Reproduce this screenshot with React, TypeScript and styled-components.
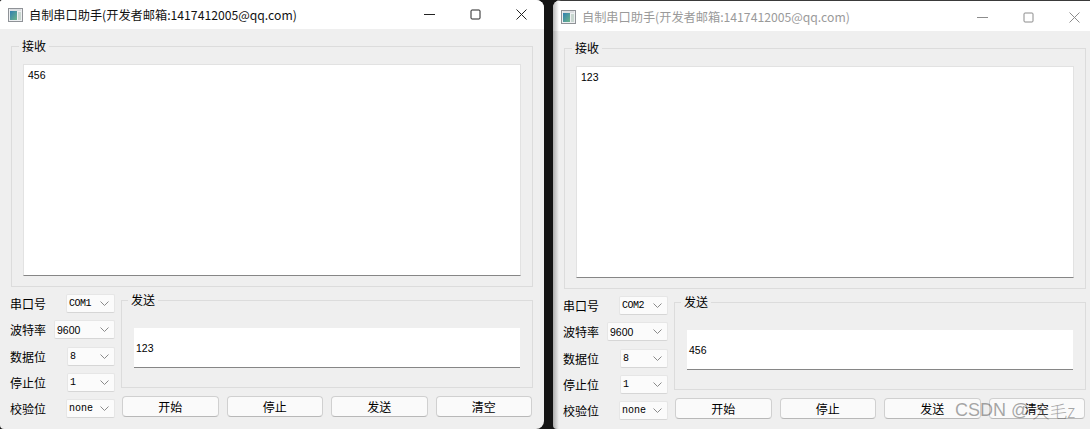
import React from "react";
import styled, { createGlobalStyle } from "styled-components";

const Global = createGlobalStyle`
  html, body { margin: 0; padding: 0; width: 1090px; height: 429px; overflow: hidden; background: #111; }
  * { box-sizing: border-box; }
`;

const Desktop = styled.div`
  position: relative;
  display: flex;
  gap: 9px;
  width: 1090px;
  height: 429px;
  overflow: hidden;
  background: #141414;
`;

const Win = styled.div<{ $inactive?: boolean }>`
  position: relative;
  flex: 0 0 544px;
  height: 429px;
  display: flex;
  flex-direction: column;
  overflow: hidden;
  background: #efefef;
  border-radius: ${(p) => (p.$inactive ? "8px 0 0 4px" : "3px 8px 8px 4px")};
  font-family: "Noto Sans CJK SC", "Liberation Sans", sans-serif;
  color: #000;
  &::after {
    content: "";
    display: ${(p) => (p.$inactive ? "block" : "none")};
    position: absolute;
    inset: 0 auto 0 0;
    width: 6px;
    background: linear-gradient(to right, rgba(0, 0, 0, 0.28), rgba(0, 0, 0, 0));
  }
`;

const TitleBar = styled.div<{ $inactive?: boolean }>`
  flex: 0 0 ${(p) => (p.$inactive ? 31 : 29)}px;
  display: flex;
  align-items: center;
  background: #fff;
  padding-left: 8px;
  padding-top: ${(p) => (p.$inactive ? 2 : 0)}px;
  border-top: ${(p) => (p.$inactive ? "1px solid #3a3a3a" : "none")};
  color: ${(p) => (p.$inactive ? "#9a9a9a" : "#111")};
`;

const AppIcon = styled.svg`
  flex: none;
  width: 15px;
  height: 14px;
  margin-right: 6px;
`;

const TitleText = styled.span`
  flex: 1;
  font-size: 12.2px;
  line-height: 14px;
  white-space: nowrap;
`;

const CaptionButton = styled.div`
  flex: 0 0 46px;
  height: 100%;
  display: flex;
  align-items: center;
  justify-content: center;
`;

const Body = styled.div`
  flex: 1;
  display: flex;
  flex-direction: column;
  padding-top: 9px;
`;

const Group = styled.fieldset`
  margin: 0;
  min-width: 0;
  padding: 0 11px 11px;
  border: 1px solid #dcdcdc;
`;

const Legend = styled.legend<{ $offset: number }>`
  margin-left: ${(p) => p.$offset}px;
  padding: 0 3px;
  height: 16px;
  font-size: 12px;
  line-height: 16px;
  color: #000;
`;

const ReceiveGroup = styled(Group)`
  margin-left: 11px;
  width: 522px;
  height: 249px;
`;

const ReceiveBox = styled.div`
  margin-top: 10px;
  height: 212px;
  width: 498px;
  padding: 5px 4px;
  background: #fff;
  border: 1px solid #e2e2e2;
  border-bottom-color: #868686;
  font-family: "Liberation Sans", sans-serif;
  font-size: 10.5px;
  line-height: 11px;
  color: #000;
`;

const Lower = styled.div`
  display: flex;
  gap: 6px;
  padding: 5px 0 0 10px;
`;

const Settings = styled.div`
  flex: 0 0 105px;
  display: flex;
  flex-direction: column;
  gap: 7.25px;
  padding-top: 2px;
`;

const SettingRow = styled.div`
  display: flex;
  align-items: center;
  justify-content: space-between;
  height: 19px;
`;

const RowLabel = styled.span`
  font-size: 12px;
  line-height: 19px;
  color: #000;
`;

const Combo = styled.div<{ $w: number; $sans?: boolean; $tight?: boolean }>`
  width: ${(p) => p.$w}px;
  height: 19px;
  display: flex;
  align-items: center;
  justify-content: space-between;
  padding: 0 5px 0 2px;
  background: #fbfbfb;
  border: 1px solid #e6e6e6;
  border-bottom-color: #d6d6d6;
  border-radius: 2px;
  font-family: ${(p) => (p.$sans ? '"Liberation Sans", sans-serif' : '"Liberation Mono", monospace')};
  font-size: ${(p) => (p.$sans ? 10.5 : 10)}px;
  letter-spacing: ${(p) => (p.$tight ? -0.5 : 0)}px;
  color: #000;
`;

const Chevron = styled.svg`
  flex: none;
  width: 9px;
  height: 5px;
`;

const RightColumn = styled.div`
  flex: 0 0 412px;
  display: flex;
  flex-direction: column;
`;

const SendGroup = styled(Group)`
  height: 96px;
  padding: 0 12px;
`;

const SendBox = styled.div`
  margin-top: 20px;
  height: 40px;
  padding: 0 2px;
  display: flex;
  align-items: center;
  background: #fff;
  border-bottom: 1px solid #868686;
  font-family: "Liberation Sans", sans-serif;
  font-size: 10.5px;
  color: #000;
`;

const ButtonRow = styled.div`
  display: flex;
  gap: 8px;
  margin: 8px 1px 0 1px;
`;

const Btn = styled.button`
  flex: 1;
  height: 21px;
  padding: 0;
  background: #fafafa;
  border: 1px solid #d0d0d0;
  border-bottom-color: #b8b8b8;
  border-radius: 4px;
  font-family: "Noto Sans CJK SC", sans-serif;
  font-size: 12px;
  line-height: 19px;
  color: #000;
`;

const Watermark = styled.div`
  position: absolute;
  left: 955px;
  top: 399px;
  display: flex;
  align-items: center;
  height: 22px;
  font-family: "Liberation Sans", sans-serif;
  font-size: 18px;
  white-space: nowrap;
  color: rgba(80, 80, 80, 0.5);
`;

const WatermarkName = styled.span`
  margin-left: 3px;
  font-family: "Noto Sans CJK SC", sans-serif;
  font-size: 17.5px;
  font-weight: 300;
`;

const WinIcon = ({ id }: { id: string }) => (
  <AppIcon viewBox="0 0 15 14">
    <defs>
      <linearGradient id={id} x1="0" y1="0" x2="1" y2="1">
        <stop offset="0" stopColor="#2f7fb0" />
        <stop offset="1" stopColor="#6fb58a" />
      </linearGradient>
    </defs>
    <rect x="0.5" y="0.5" width="14" height="13" fill="#eef0f2" stroke="#8f9297" />
    <rect x="2" y="3" width="7" height="9" fill={`url(#${id})`} />
    <rect x="2" y="1.5" width="11" height="1" fill="#c9ccd0" />
    <rect x="10" y="4" width="3" height="8" fill="#c8d6cf" />
  </AppIcon>
);

const Controls = ({ color }: { color: string }) => (
  <>
    <CaptionButton>
      <svg width="11" height="11" viewBox="0 0 11 11"><path d="M0 5.5h11" stroke={color} fill="none" /></svg>
    </CaptionButton>
    <CaptionButton>
      <svg width="11" height="11" viewBox="0 0 11 11"><rect x="1" y="1" width="9" height="9" rx="1" stroke={color} fill="none" /></svg>
    </CaptionButton>
    <CaptionButton>
      <svg width="11" height="11" viewBox="0 0 11 11"><path d="M.5.5l10 10M10.5.5l-10 10" stroke={color} fill="none" /></svg>
    </CaptionButton>
  </>
);

const Window = ({ inactive, port, rx, tx }: { inactive?: boolean; port: string; rx: string; tx: string }) => {
  const rows: { label: string; value: string; w: number; sans?: boolean; tight?: boolean }[] = [
    { label: "串口号", value: port, w: 49, tight: true },
    { label: "波特率", value: "9600", w: 61, sans: true },
    { label: "数据位", value: "8", w: 48 },
    { label: "停止位", value: "1", w: 48 },
    { label: "校验位", value: "none", w: 49 },
  ];
  return (
    <Win $inactive={inactive}>
      <TitleBar $inactive={inactive}>
        <WinIcon id={inactive ? "icon-b" : "icon-a"} />
        <TitleText>自制串口助手(开发者邮箱:1417412005@qq.com)</TitleText>
        <Controls color={inactive ? "#8c8c8c" : "#222"} />
      </TitleBar>
      <Body>
        <ReceiveGroup>
          <Legend $offset={-4}>接收</Legend>
          <ReceiveBox>{rx}</ReceiveBox>
        </ReceiveGroup>
        <Lower>
          <Settings>
            {rows.map((r) => (
              <SettingRow key={r.label}>
                <RowLabel>{r.label}</RowLabel>
                <Combo $w={r.w} $sans={r.sans} $tight={r.tight}>
                  <span>{r.value}</span>
                  <Chevron viewBox="0 0 9 5">
                    <path d="M.5.5L4.5 4.5 8.5.5" stroke="#8a8a8a" fill="none" />
                  </Chevron>
                </Combo>
              </SettingRow>
            ))}
          </Settings>
          <RightColumn>
            <SendGroup>
              <Legend $offset={-6}>发送</Legend>
              <SendBox>{tx}</SendBox>
            </SendGroup>
            <ButtonRow>
              <Btn>开始</Btn>
              <Btn>停止</Btn>
              <Btn>发送</Btn>
              <Btn>清空</Btn>
            </ButtonRow>
          </RightColumn>
        </Lower>
      </Body>
    </Win>
  );
};

export default function App() {
  return (
    <Desktop>
      <Global />
      <Window port="COM1" rx="456" tx="123" />
      <Window inactive port="COM2" rx="123" tx="456" />
      <Watermark>
        CSDN @<WatermarkName>大毛z</WatermarkName>
      </Watermark>
    </Desktop>
  );
}
